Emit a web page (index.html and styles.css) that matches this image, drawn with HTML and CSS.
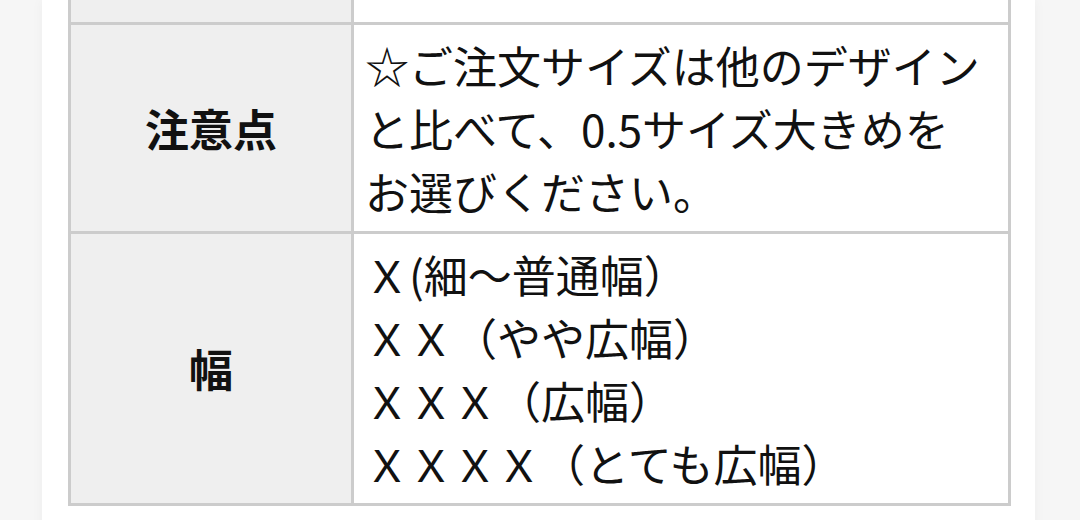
FILE: index.html
```html
<!DOCTYPE html>
<html lang="ja">
<head>
<meta charset="utf-8">
<link rel="stylesheet" href="styles.css">
</head>
<body>
<div class="page">
  <div class="card">
    <table class="spec">
      <tr class="row-cut">
        <th></th>
        <td></td>
      </tr>
      <tr>
        <th>注意点</th>
        <td>☆ご注文サイズは他のデザイン<br>と比べて、0.5サイズ大きめを<br>お選びください。</td>
      </tr>
      <tr>
        <th>幅</th>
        <td>Ｘ(細～普通幅）<br>ＸＸ（やや広幅）<br>ＸＸＸ（広幅）<br>ＸＸＸＸ（とても広幅）</td>
      </tr>
    </table>
  </div>
</div>
</body>
</html>
```

FILE: styles.css
```css
html, body {
  margin: 0;
  padding: 0;
}
body {
  background: #f6f6f6;
  font-family: "Noto Sans CJK JP", "Noto Sans", sans-serif;
  color: #111;
  width: 1080px;
  height: 520px;
  overflow: hidden;
}
.page {
  padding-left: 42px;
}
.card {
  display: flow-root;
  width: 993px;
  height: 540px;
  background: #fff;
  box-shadow: 0 0 12px rgba(0, 0, 0, 0.04);
  padding-left: 26px;
  box-sizing: border-box;
}
.spec {
  width: 943px;
  border-collapse: separate;
  border-spacing: 0;
  border-left: 3px solid #cccccc;
  margin-top: -3px;
  border-top: 3px solid #cccccc;
  table-layout: fixed;
}
.spec th,
.spec td {
  border-right: 3px solid #cccccc;
  border-bottom: 3px solid #cccccc;
  font-size: 44px;
  line-height: 63px;
  padding: 8.5px 0;
}
.spec th {
  width: 280px;
  background: #efefef;
  font-weight: bold;
  text-align: center;
  vertical-align: middle;
}
.spec td {
  text-align: left;
  padding-left: 11px;
  padding-right: 10px;
  vertical-align: top;
  white-space: nowrap;
}
.spec .row-cut th,
.spec .row-cut td {
  height: 22px;
  padding: 0;
}
```
